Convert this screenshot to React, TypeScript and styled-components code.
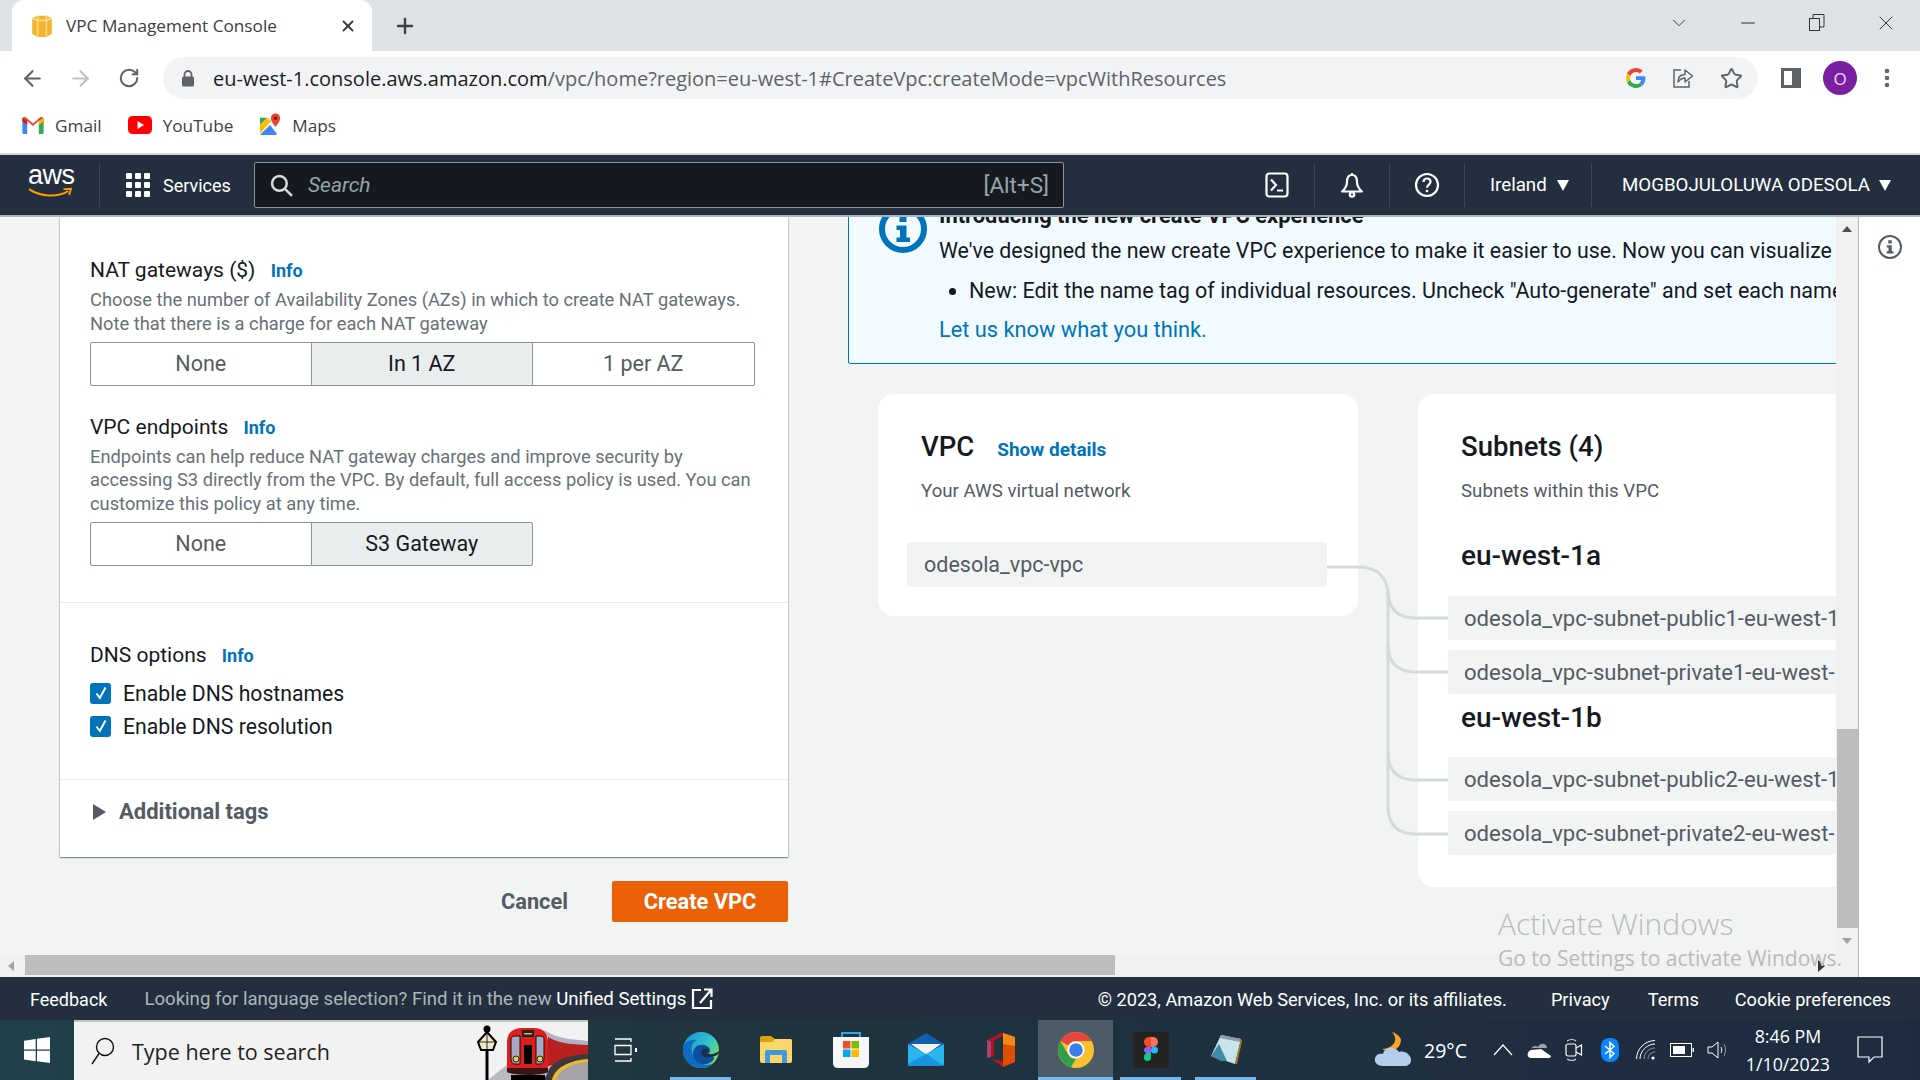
import React from "react";
import styled, { createGlobalStyle } from "styled-components";
import {
  ArrowLeft,
  ArrowRight,
  ChevronDown,
  Minus,
  MoreVertical,
  Plus,
  RotateCw,
  Star,
  X,
} from "lucide-react";

const GlobalStyle = createGlobalStyle`
  html, body {
    margin: 0;
    padding: 0;
    background: #f2f3f3;
  }
  * {
    box-sizing: border-box;
  }
  svg {
    flex: none;
    display: block;
  }
`;

const subnets = {
  a: ["odesola_vpc-subnet-public1-eu-west-1a", "odesola_vpc-subnet-private1-eu-west-1a"],
  b: ["odesola_vpc-subnet-public2-eu-west-1b", "odesola_vpc-subnet-private2-eu-west-1b"],
};

function AwsBoxIcon() {
  return (
    <svg width="22" height="24" viewBox="0 0 20 22">
      <path d="M1 4 L6 1.5 L14 1.5 L19 4 L19 18 L14 21 L6 21 L1 18 Z" fill="#f4b32c" />
      <path d="M6 1.5 L6 21 M14 1.5 L14 21" stroke="#fbd77a" strokeWidth="1.6" />
      <path d="M1 4 L6 6 L14 6 L19 4" stroke="#fde3a0" strokeWidth="1.4" fill="none" />
    </svg>
  );
}

function GmailIcon() {
  return (
    <svg width="22" height="17" viewBox="0 0 20 16">
      <path d="M0 3 V14.5 Q0 16 1.5 16 H4.5 V7 Z" fill="#4285f4" />
      <path d="M15.5 7 V16 H18.5 Q20 16 20 14.5 V3 Z" fill="#34a853" />
      <path d="M0 2.2 Q0 0 2 0 Q3 0 4 1 L10 6 L16 1 Q17 0 18 0 Q20 0 20 2.2 V4 L15.5 7.5 V3.5 L10 8.5 L4.5 3.5 V7.5 L0 4 Z" fill="#ea4335" />
      <path d="M15.5 3.5 L20 0.8 V4 L15.5 7.5 Z" fill="#fbbc04" />
      <path d="M0 0.8 L4.5 3.5 V7.5 L0 4 Z" fill="#c5221f" />
    </svg>
  );
}

function YoutubeIcon() {
  return (
    <svg width="24" height="18" viewBox="0 0 24 18">
      <rect width="24" height="18" rx="4.5" fill="#ff0000" />
      <path d="M9.5 5 L16 9 L9.5 13 Z" fill="#fff" />
    </svg>
  );
}

function MapsIcon() {
  return (
    <svg width="22" height="26" viewBox="0 0 24 26">
      <path d="M1 5 H14 V24 H1 Z" fill="#ecf3e8" />
      <path d="M1 5 H9 L1 13 Z" fill="#34a853" />
      <path d="M1 24 L12 13 L19 22 V24 Z" fill="#4285f4" />
      <path d="M1 13 L9 5 L13 9 L1 22 Z" fill="#fbbc04" />
      <path d="M18 0.5 C14.8 0.5 13 3 13 5.6 C13 9.5 18 15 18 15 C18 15 23 9.5 23 5.6 C23 3 21.2 0.5 18 0.5 Z" fill="#ea4335" />
      <circle cx="18" cy="5.6" r="1.9" fill="#8f1a12" />
    </svg>
  );
}

function GoogleIcon() {
  return (
    <svg width="20" height="20" viewBox="0 0 48 48">
      <path fill="#ea4335" d="M24 9.5c3.9 0 6.9 1.6 9.1 3.6l6.8-6.8C35.7 2.4 30.3 0 24 0 14.6 0 6.5 5.4 2.6 13.2l7.9 6.2C12.4 13.7 17.7 9.5 24 9.5z" />
      <path fill="#4285f4" d="M46.5 24.5c0-1.6-.1-3.1-.4-4.5H24v9h12.7c-.6 3-2.2 5.4-4.7 7.1l7.6 5.9c4.4-4.1 6.9-10.1 6.9-17.5z" />
      <path fill="#fbbc05" d="M10.5 28.6c-.5-1.5-.8-3-.8-4.6s.3-3.2.8-4.6l-7.9-6.2C.9 16.5 0 20.1 0 24s.9 7.5 2.6 10.8l7.9-6.2z" />
      <path fill="#34a853" d="M24 48c6.5 0 11.9-2.1 15.6-5.8L32 36.3c-2 1.4-4.7 2.2-8 2.2-6.3 0-11.6-4.2-13.5-9.9l-7.9 6.2C6.5 42.6 14.6 48 24 48z" />
    </svg>
  );
}

function ShareIcon() {
  return (
    <svg width="22" height="22" viewBox="0 0 22 22" fill="none" stroke="#5f6368" strokeWidth="1.5">
      <path d="M9 3 H2 V20 H17 V14" />
      <path d="M6 15 C6 10 9 7.5 13 7.5 V3 L20.5 9 L13 15 V11 C10 11 8 12.5 6 15 Z" strokeLinejoin="round" />
    </svg>
  );
}

function SidePanelIcon() {
  return (
    <svg width="20" height="20" viewBox="0 0 20 20">
      <path d="M0 0 H20 V20 H0 Z M3 3 V17 H11 V3 Z" fill="#5f6368" fillRule="evenodd" />
    </svg>
  );
}

function RestoreIcon() {
  return (
    <svg width="16" height="18" viewBox="0 0 16 18" fill="none" stroke="#333" strokeWidth="1">
      <rect x="0.5" y="4.5" width="10" height="12" />
      <path d="M4 4.5 V0.5 H15 V13 H10.5" />
    </svg>
  );
}

function LockIcon() {
  return (
    <svg width="14" height="17" viewBox="0 0 14 17">
      <path d="M3.5 7 V4.5 A3.5 3.5 0 0 1 10.5 4.5 V7" fill="none" stroke="#5f6368" strokeWidth="1.8" />
      <rect x="1" y="6.5" width="12" height="10" rx="1.5" fill="#5f6368" />
    </svg>
  );
}

function GridIcon() {
  return (
    <svg width="24" height="24" viewBox="0 0 24 24" fill="#fff">
      {[0, 9, 18].map((y) =>
        [0, 9, 18].map((x) => <rect key={`${x}-${y}`} x={x} y={y} width="6" height="6" rx="1" />),
      )}
    </svg>
  );
}

function SearchGlass({ color, size }: { color: string; size: number }) {
  return (
    <svg width={size} height={size} viewBox="0 0 22 22" fill="none" stroke={color} strokeWidth="2.4">
      <circle cx="9" cy="9" r="7" />
      <path d="M14 14 L21 21" />
    </svg>
  );
}

function ShellIcon() {
  return (
    <svg width="24" height="26" viewBox="0 0 24 26" fill="none" stroke="#fff" strokeWidth="2.2">
      <rect x="1.5" y="1.5" width="21" height="23" rx="3" />
      <path d="M6 7.5 L11 13 L6 18.5 M12 18.5 H18" />
    </svg>
  );
}

function BellIcon() {
  return (
    <svg width="26" height="26" viewBox="0 0 26 26" fill="none" stroke="#fff" strokeWidth="2.2">
      <path d="M13 3 C8.5 3 8 7 8 10 C8 14 6.5 16.5 3 19.5 H23 C19.5 16.5 18 14 18 10 C18 7 17.5 3 13 3 Z" strokeLinejoin="round" />
      <path d="M13 1 V3" />
      <circle cx="13" cy="22.5" r="2.2" />
    </svg>
  );
}

function HelpIcon() {
  return (
    <svg width="26" height="26" viewBox="0 0 26 26" fill="none" stroke="#fff" strokeWidth="2.2">
      <circle cx="13" cy="13" r="11" />
      <path d="M9.5 10 C9.5 7.5 11 6.5 13 6.5 C15 6.5 16.5 7.8 16.5 9.8 C16.5 12.5 13 12.8 13 15.8" />
      <circle cx="13" cy="19" r="1.3" fill="#fff" stroke="none" />
    </svg>
  );
}

function InfoCircle({ size, color, weight }: { size: number; color: string; weight: number }) {
  return (
    <svg width={size} height={size} viewBox="0 0 48 48">
      <circle cx="24" cy="24" r={24 - weight / 2} fill="none" stroke={color} strokeWidth={weight} />
      <rect x="20.5" y="10.5" width="7" height="6.5" fill={color} />
      <path d="M17.5 20.5 H27.5 V32.5 H31 V37 H17.5 V32.5 H21 V25 H17.5 Z" fill={color} />
    </svg>
  );
}

function CheckMark() {
  return (
    <svg width="14" height="14" viewBox="0 0 14 14" fill="none" stroke="#fff" strokeWidth="2">
      <path d="M2.5 7.5 L5.8 12 L11.5 1.5" />
    </svg>
  );
}

function ExternalIcon() {
  return (
    <svg width="22" height="22" viewBox="0 0 22 22" fill="none" stroke="#fff" strokeWidth="2.2">
      <path d="M10 2 H2 V20 H20 V12" />
      <path d="M13 1.5 H20.5 V9 M20 2 L9 15" />
    </svg>
  );
}

function WindowsLogo() {
  return (
    <svg width="26" height="26" viewBox="0 0 26 26" fill="#fff">
      <path d="M0 3.7 L11.7 2 V12.5 H0 Z M13 1.8 L26 0 V12.5 H13 Z M0 13.7 H11.7 V24.3 L0 22.5 Z M13 13.7 H26 V26 L13 24.2 Z" />
    </svg>
  );
}

function TrainArt() {
  return (
    <svg width="128" height="58" viewBox="0 0 128 58">
      <path d="M28 58 L48 42 L128 38 V58 Z" fill="#b9b9c0" />
      <path d="M88 12 C100 20 112 20 128 21 V36 L88 44 Z" fill="#b92020" />
      <path d="M84 8 C100 18 112 17 128 19 V23 C110 22 100 22 88 15 Z" fill="#aeb2c6" />
      <path d="M88 50 C92 38 110 33 128 32 V58 H84 Z" fill="#3a3a3a" />
      <path d="M92 58 C94 46 110 38 128 37 V58 Z" fill="#f0b92d" />
      <path d="M96 58 C98 48 112 41 128 40 V58 Z" fill="#a5a2a8" />
      <path d="M47 20 C47 10 54 6 62 6 H74 C82 6 88 10 88 20 V44 C88 48 85 50 82 50 H54 C50 50 47 48 47 44 Z" fill="#e01e1e" />
      <path d="M47 46 H88 V50 C84 54 52 54 47 50 Z" fill="#3a1414" />
      <rect x="62" y="8" width="12" height="7" fill="#222" />
      <rect x="64" y="11" width="8" height="1.5" fill="#e2b45a" />
      <path d="M51 17 C51 14 54 14 60 14 V42 H55 C52 42 51 39 51 36 Z" fill="#a8a8c0" stroke="#111" strokeWidth="1" />
      <path d="M84 17 C84 14 81 14 76 14 V42 H80 C83 42 84 39 84 36 Z" fill="#a8a8c0" stroke="#111" strokeWidth="1" />
      <rect x="64" y="23" width="8" height="19" fill="#000" />
      <circle cx="56" cy="37" r="3" fill="#f2c94c" stroke="#222" />
      <circle cx="80" cy="37" r="3" fill="#f2c94c" stroke="#222" />
      <rect x="51" y="53" width="34" height="5" fill="#000" />
      <rect x="25.5" y="28" width="3" height="30" fill="#000" />
      <circle cx="27" cy="7" r="3.5" fill="#000" />
      <path d="M27 10 L36 20 L33 28 H21 L18 20 Z" fill="#efe7c8" stroke="#000" strokeWidth="2" />
      <path d="M27 10 V28 M18 20 H36" stroke="#000" strokeWidth="0.8" />
    </svg>
  );
}

function TaskViewIcon() {
  return (
    <svg width="24" height="24" viewBox="0 0 24 24" fill="none" stroke="#fff" strokeWidth="1.3">
      <path d="M1 1 H17 V4 M1 23 H17 V20 M1 7.5 H17 V16.5 H1 Z" />
      <rect x="21" y="10" width="2" height="4" fill="#fff" stroke="none" />
    </svg>
  );
}

function EdgeIcon() {
  return (
    <svg width="36" height="36" viewBox="0 0 36 36">
      <defs>
        <linearGradient id="edgeTop" x1="0" y1="0" x2="1" y2="0.7">
          <stop offset="0" stopColor="#1a8fd8" />
          <stop offset="0.6" stopColor="#30c2c8" />
          <stop offset="1" stopColor="#7fdc5e" />
        </linearGradient>
      </defs>
      <circle cx="18" cy="18" r="18" fill="url(#edgeTop)" />
      <path d="M0 18 C0 9 8 7 14 8 C9 11 8 14 9 20 C11 30 22 36 30 31 C26 35 22 36 18 36 C8 36 0 28 0 18 Z" fill="#0f6cc4" />
      <path d="M10 22 C10 14 18 11 24 14 C28 16 28 21 24 23 L30 24 C33 26 29 31 24 32 C15 33 10 28 10 22 Z" fill="#0d4f9c" />
      <path d="M19 22 C17 19 21 15 25 17 C27 19 25 21 22 20 C26 24 32 22 36 19 C36 24 32 24 26 25 C22 26 20 24 19 22 Z" fill="#1f2f3f" />
    </svg>
  );
}

function FolderIcon() {
  return (
    <svg width="32" height="28" viewBox="0 0 32 28">
      <path d="M0 2 Q0 0 2 0 H11 L15 3 H30 Q32 3 32 5 V8 H0 Z" fill="#d9a30f" />
      <path d="M0 6 H12 L15 3 H30 Q32 3 32 5 V25 Q32 27 30 27 H2 Q0 27 0 25 Z" fill="#fbd76a" />
      <path d="M5 27 V16 Q5 14 7 14 H25 Q27 14 27 16 V27 H22 V19 H10 V27 Z" fill="#3f9ae0" />
    </svg>
  );
}

function StoreIcon() {
  return (
    <svg width="36" height="36" viewBox="0 0 36 36">
      <path d="M9 5 V1 H27 V5" fill="none" stroke="#2aa8e0" strokeWidth="2" />
      <path d="M0 5 H36 V31 Q36 36 31 36 H5 Q0 36 0 31 Z" fill="#f6f6f6" />
      <rect x="10" y="9" width="7.5" height="7.5" fill="#f25022" />
      <rect x="18.5" y="9" width="7.5" height="7.5" fill="#7fba00" />
      <rect x="10" y="17.5" width="7.5" height="7.5" fill="#00a4ef" />
      <rect x="18.5" y="17.5" width="7.5" height="7.5" fill="#ffb900" />
    </svg>
  );
}

function MailIcon() {
  return (
    <svg width="36" height="34" viewBox="0 0 36 34">
      <path d="M0 11 L18 0 L36 11 V14 H0 Z" fill="#0f5fae" />
      <path d="M3 11 H33 L18 22 Z" fill="#f4f4f4" />
      <path d="M0 11 L18 21 L36 11 V31 Q36 33 34 33 H2 Q0 33 0 31 Z" fill="#29b6ef" />
      <path d="M0 31 L18 21 L36 33 H2 Q0 33 0 31 Z" fill="#1a92dc" />
    </svg>
  );
}

function OfficeIcon() {
  return (
    <svg width="28" height="36" viewBox="0 0 28 36">
      <path d="M0 8 L16 0 V4 L7 8 V24 L0 26 Z" fill="#b3141d" />
      <path d="M0 8 V26 L4 25 V10 Z" fill="#a8437a" />
      <path d="M16 1 L28 5 V30 L16 35 Z" fill="#e04e00" />
      <path d="M16 1 L28 5 V14 L16 12 Z" fill="#f08a12" />
      <path d="M5 27 L16 29 V35 Z" fill="#c2121e" />
    </svg>
  );
}

function ChromeIcon() {
  return (
    <svg width="36" height="36" viewBox="0 0 36 36">
      <circle cx="18" cy="18" r="18" fill="#fbc02d" />
      <path d="M18 0 A18 18 0 0 1 33.6 9 H18 A9 9 0 0 0 10 13.5 L2.4 9 A18 18 0 0 1 18 0 Z" fill="#e8453c" />
      <path d="M2.4 9 L10.2 22.5 A9 9 0 0 0 18 27 L13 35.3 A18 18 0 0 1 2.4 9 Z" fill="#2f9e4f" />
      <circle cx="18" cy="18" r="8.5" fill="#fff" />
      <circle cx="18" cy="18" r="6.8" fill="#3b7ee9" />
    </svg>
  );
}

function FigmaIcon() {
  return (
    <svg width="36" height="36" viewBox="0 0 36 36">
      <rect width="36" height="36" rx="3" fill="#232323" />
      <path d="M11 10 A5 5 0 0 1 16 5 H19 V15 H16 A5 5 0 0 1 11 10 Z" fill="#f24e1e" />
      <path d="M18 5 H20 A5 5 0 0 1 20 15 H18 Z" fill="#ff7262" />
      <path d="M11 18 A3.5 3.5 0 0 1 16 15 H18 V21 H16 A3.5 3.5 0 0 1 11 18 Z" fill="#a259ff" />
      <circle cx="21.5" cy="18" r="3.5" fill="#1abcfe" />
      <path d="M11 25 A4 4 0 0 1 15 21 H18 V26 A3.5 3.5 0 0 1 11 25 Z" fill="#0acf83" />
    </svg>
  );
}

function NotepadIcon() {
  return (
    <svg width="34" height="32" viewBox="0 0 34 32">
      <path d="M12 1 L32 5 L26 30 L2 22 Z" fill="#c6e4ea" />
      <path d="M2 22 L10 10 L18 27 L12 27 Z" fill="#3f8ba5" />
      <path d="M12 1 L32 5 L31 8 L11 4 Z" fill="#8d9ca2" />
      <path d="M32 5 L33 7 L28 30 L26 30 Z" fill="#a9791c" />
    </svg>
  );
}

function WeatherIcon() {
  return (
    <svg width="38" height="36" viewBox="0 0 38 36">
      <path d="M18 0 C24 6 22 16 8 17 C14 20 26 20 27 8 C27 5 22 1 18 0 Z" fill="#f5a623" />
      <path d="M9 34 C3 34 0 30 1 26 C2 22 6 21 9 22 C10 15 21 13 25 20 C31 18 37 23 37 28 C37 32 34 34 30 34 Z" fill="#b5cdec" />
    </svg>
  );
}

function OneDriveIcon() {
  return (
    <svg width="24" height="16" viewBox="0 0 24 16">
      <path d="M4 8 C4 4 9 3 11 5 C13 0 20 1 20 6 H4 Z" fill="#9aa3ad" />
      <path d="M4 16 C0 16 -1 10 4 8 L14 7 L24 14 Q24 16 22 16 Z" fill="#fff" />
    </svg>
  );
}

function MeetIcon() {
  return (
    <svg width="18" height="24" viewBox="0 0 18 24" fill="none" stroke="#fff" strokeWidth="1.2">
      <rect x="1" y="6" width="10" height="12" rx="2" />
      <path d="M11 10 L16.5 7 V17 L11 14" />
      <path d="M2 3 C5 1 9 1 11 3 M2 21 C5 23 9 23 11 21" stroke="#c9d0d6" />
    </svg>
  );
}

function BluetoothIcon() {
  return (
    <svg width="18" height="24" viewBox="0 0 18 24">
      <rect width="18" height="24" rx="8" fill="#0a84ff" />
      <path d="M4 8 L13 15.5 L9 19.5 V4.5 L13 8.5 L4 16" fill="none" stroke="#fff" strokeWidth="1.5" />
    </svg>
  );
}

function WifiIcon() {
  return (
    <svg width="20" height="20" viewBox="0 0 20 20" fill="none" stroke="#fff" strokeWidth="1">
      <path d="M0.5 19 C0.5 9 9 0.5 19 0.5" />
      <path d="M4 19 C4 11 11 4 19 4" />
      <path d="M8 19 C8 13 13 8 19 8" stroke="#8e99a3" />
      <path d="M12 19 C12 15 15 12 19 12" stroke="#8e99a3" />
      <circle cx="17" cy="18" r="1.6" fill="#fff" stroke="none" />
    </svg>
  );
}

function BatteryIcon() {
  return (
    <svg width="24" height="14" viewBox="0 0 24 14">
      <rect x="0.5" y="0.5" width="21" height="13" fill="none" stroke="#fff" />
      <rect x="3" y="3" width="12" height="8" fill="#fff" />
      <rect x="22.5" y="5" width="1.5" height="4" fill="#fff" />
    </svg>
  );
}

function VolumeIcon() {
  return (
    <svg width="22" height="20" viewBox="0 0 22 20" fill="none" stroke="#fff" strokeWidth="1">
      <path d="M1 7 H5 L11 2 V18 L5 13 H1 Z" />
      <path d="M14 7 C15 9 15 11 14 13" />
      <path d="M17 4 C19 8 19 12 17 16" stroke="#8e99a3" />
    </svg>
  );
}

function NotificationIcon() {
  return (
    <svg width="26" height="28" viewBox="0 0 26 28" fill="none" stroke="#fff" strokeWidth="1.2">
      <path d="M1 1 H25 V21 H17 L12 26 V21 H1 Z" />
    </svg>
  );
}

interface SegmentsProps {
  options: string[];
  selected: string;
}

function Segments({ options, selected }: SegmentsProps) {
  return (
    <SegmentGroup>
      {options.map((option) => (
        <Segment key={option} $active={option === selected}>
          {option}
        </Segment>
      ))}
    </SegmentGroup>
  );
}

function DnsCheck({ label }: { label: string }) {
  return (
    <CheckRow>
      <CheckBox>
        <CheckMark />
      </CheckBox>
      {label}
    </CheckRow>
  );
}

export default function App() {
  return (
    <Page>
      <GlobalStyle />

      <TabStrip>
        <Tab>
          <AwsBoxIcon />
          <TabTitle>VPC Management Console</TabTitle>
          <X size={18} color="#3c4043" strokeWidth={2.6} />
        </Tab>
        <NewTab>
          <Plus size={24} color="#3c4043" strokeWidth={2.4} />
        </NewTab>
        <WindowControls>
          <ControlCell>
            <ChevronDown size={22} color="#333" strokeWidth={1} />
          </ControlCell>
          <ControlCell>
            <Minus size={22} color="#333" strokeWidth={1.2} />
          </ControlCell>
          <ControlCell>
            <RestoreIcon />
          </ControlCell>
          <ControlCell>
            <X size={24} color="#333" strokeWidth={1} />
          </ControlCell>
        </WindowControls>
      </TabStrip>

      <Toolbar>
        <ArrowLeft size={25} color="#5f6368" strokeWidth={2} />
        <ArrowRight size={25} color="#bdc1c6" strokeWidth={2} />
        <ReloadSlot>
          <RotateCw size={22} color="#5f6368" strokeWidth={2.2} />
        </ReloadSlot>
        <Omnibox>
          <LockIcon />
          <Url>
            <UrlHost>eu-west-1.console.aws.amazon.com</UrlHost>
            /vpc/home?region=eu-west-1#CreateVpc:createMode=vpcWithResources
          </Url>
          <OmniboxActions>
            <GoogleIcon />
            <ShareIcon />
            <Star size={23} color="#5f6368" strokeWidth={2} />
          </OmniboxActions>
        </Omnibox>
        <SidePanelIcon />
        <Avatar>O</Avatar>
        <MenuSlot>
          <MoreVertical size={24} color="#5f6368" strokeWidth={2.6} />
        </MenuSlot>
      </Toolbar>

      <Bookmarks>
        <Bookmark>
          <GmailIcon />
          Gmail
        </Bookmark>
        <Bookmark>
          <YoutubeIcon />
          YouTube
        </Bookmark>
        <Bookmark>
          <MapsIcon />
          Maps
        </Bookmark>
      </Bookmarks>

      <ConsoleNav>
        <AwsLogo>
          <AwsWord>aws</AwsWord>
          <svg width="44" height="11" viewBox="0 0 46 11" fill="none">
            <path d="M1 2 C13 10 30 11 42 4" stroke="#f90" strokeWidth="2.2" />
            <path d="M37 2 L45 1.5 L43 8" stroke="#f90" strokeWidth="2" />
          </svg>
        </AwsLogo>
        <ServicesButton>
          <GridIcon />
          Services
        </ServicesButton>
        <GlobalSearch>
          <SearchGlass color="#d5dbdb" size={23} />
          <SearchHint>Search</SearchHint>
          <Shortcut>[Alt+S]</Shortcut>
        </GlobalSearch>
        <NavRight>
          <NavIconCell>
            <ShellIcon />
          </NavIconCell>
          <NavIconCell>
            <BellIcon />
          </NavIconCell>
          <NavIconCell>
            <HelpIcon />
          </NavIconCell>
          <RegionMenu>
            Ireland
            <NavCaret />
          </RegionMenu>
          <AccountMenu>
            MOGBOJULOLUWA ODESOLA
            <NavCaret />
          </AccountMenu>
        </NavRight>
      </ConsoleNav>

      <Workspace>
        <Canvas>
          <Scroller>
            <FormColumn>
              <FormPanel>
                <FormSection>
                  <FieldLabel>
                    NAT gateways ($) <InfoLink>Info</InfoLink>
                  </FieldLabel>
                  <FieldHelp>
                    Choose the number of Availability Zones (AZs) in which to create NAT gateways.
                    <br />
                    Note that there is a charge for each NAT gateway
                  </FieldHelp>
                  <Segments options={["None", "In 1 AZ", "1 per AZ"]} selected="In 1 AZ" />
                  <FieldLabel $spaced>
                    VPC endpoints <InfoLink>Info</InfoLink>
                  </FieldLabel>
                  <FieldHelp>
                    Endpoints can help reduce NAT gateway charges and improve security by
                    <br />
                    accessing S3 directly from the VPC. By default, full access policy is used. You can
                    <br />
                    customize this policy at any time.
                  </FieldHelp>
                  <Segments options={["None", "S3 Gateway"]} selected="S3 Gateway" />
                </FormSection>
                <DnsSection>
                  <FieldLabel>
                    DNS options <InfoLink>Info</InfoLink>
                  </FieldLabel>
                  <CheckList>
                    <DnsCheck label="Enable DNS hostnames" />
                    <DnsCheck label="Enable DNS resolution" />
                  </CheckList>
                </DnsSection>
                <TagsSection>
                  <TagsCaret />
                  Additional tags
                </TagsSection>
              </FormPanel>
              <FormActions>
                <CancelButton>Cancel</CancelButton>
                <CreateButton>Create VPC</CreateButton>
              </FormActions>
            </FormColumn>

            <PreviewColumn>
              <Banner>
                <BannerIcon>
                  <InfoCircle size={48} color="#0073bb" weight={6} />
                </BannerIcon>
                <BannerBody>
                  <BannerTitle>Introducing the new create VPC experience</BannerTitle>
                  <BannerLine>
                    We've designed the new create VPC experience to make it easier to use. Now you can visualize your VPC
                  </BannerLine>
                  <BannerBullets>
                    <li>
                      New: Edit the name tag of individual resources. Uncheck "Auto-generate" and set each name tag
                    </li>
                  </BannerBullets>
                  <BannerLink>Let us know what you think.</BannerLink>
                </BannerBody>
              </Banner>

              <Diagram>
                <VpcCard>
                  <CardTitleRow>
                    <CardTitle>VPC</CardTitle>
                    <ShowDetails>Show details</ShowDetails>
                  </CardTitleRow>
                  <CardSubtitle>Your AWS virtual network</CardSubtitle>
                  <VpcNode>odesola_vpc-vpc</VpcNode>
                </VpcCard>
                <SubnetCard>
                  <CardTitleRow>
                    <CardTitle>Subnets (4)</CardTitle>
                  </CardTitleRow>
                  <CardSubtitle>Subnets within this VPC</CardSubtitle>
                  <ZoneTitle>eu-west-1a</ZoneTitle>
                  <NodeStack>
                    {subnets.a.map((name) => (
                      <SubnetNode key={name}>{name}</SubnetNode>
                    ))}
                  </NodeStack>
                  <ZoneTitle $second>eu-west-1b</ZoneTitle>
                  <NodeStack>
                    {subnets.b.map((name) => (
                      <SubnetNode key={name}>{name}</SubnetNode>
                    ))}
                  </NodeStack>
                </SubnetCard>
                <Connectors width="580" height="460" viewBox="0 0 580 460" fill="none">
                  <path d="M449 173 H480 Q510 173 510 203 V412 Q510 440 538 440 H570" />
                  <path d="M510 196 Q510 224 538 224 H570" />
                  <path d="M510 250 Q510 278 538 278 H570" />
                  <path d="M510 358 Q510 386 538 386 H570" />
                </Connectors>
              </Diagram>
            </PreviewColumn>
          </Scroller>
          <HScroll>
            <ArrowLeftTip />
            <HThumb />
            <ArrowRightTip />
          </HScroll>
        </Canvas>
        <VScroll>
          <ArrowUpTip />
          <VThumb />
          <ArrowDownTip />
        </VScroll>
        <Rail>
          <InfoCircle size={24} color="#545b64" weight={4} />
        </Rail>
        <Watermark>
          <WatermarkTitle>Activate Windows</WatermarkTitle>
          <WatermarkText>Go to Settings to activate Windows.</WatermarkText>
        </Watermark>
      </Workspace>

      <Footer>
        <FooterLink>Feedback</FooterLink>
        <FooterNote>
          Looking for language selection? Find it in the new <FooterLink>Unified Settings</FooterLink>
          <ExternalIcon />
        </FooterNote>
        <FooterRight>
          <FooterLink>© 2023, Amazon Web Services, Inc. or its affiliates.</FooterLink>
          <FooterLink>Privacy</FooterLink>
          <FooterLink>Terms</FooterLink>
          <FooterLink>Cookie preferences</FooterLink>
        </FooterRight>
      </Footer>

      <Taskbar>
        <StartTile>
          <WindowsLogo />
        </StartTile>
        <TaskSearch>
          <SearchGlassSlim>
            <svg width="24" height="28" viewBox="0 0 24 28" fill="none" stroke="#111" strokeWidth="1.4">
              <circle cx="14" cy="10" r="8.5" />
              <path d="M8 16.5 L1 27" />
            </svg>
          </SearchGlassSlim>
          <TaskSearchText>Type here to search</TaskSearchText>
          <TrainArt />
        </TaskSearch>
        <TaskTile>
          <TaskViewIcon />
        </TaskTile>
        <TaskTile $open>
          <EdgeIcon />
        </TaskTile>
        <TaskTile>
          <FolderIcon />
        </TaskTile>
        <TaskTile>
          <StoreIcon />
        </TaskTile>
        <TaskTile>
          <MailIcon />
        </TaskTile>
        <TaskTile>
          <OfficeIcon />
        </TaskTile>
        <TaskTile $open $active>
          <ChromeIcon />
        </TaskTile>
        <TaskTile $open>
          <FigmaIcon />
        </TaskTile>
        <TaskTile $open>
          <NotepadIcon />
        </TaskTile>
        <Tray>
          <WeatherIcon />
          <Temperature>29°C</Temperature>
          <TrayIcons>
            <svg width="20" height="12" viewBox="0 0 20 12" fill="none" stroke="#fff" strokeWidth="1.2">
              <path d="M1 11 L10 1 L19 11" />
            </svg>
            <OneDriveIcon />
            <MeetIcon />
            <BluetoothIcon />
            <WifiIcon />
            <BatteryIcon />
            <VolumeIcon />
          </TrayIcons>
          <Clock>
            <span>8:46 PM</span>
            <span>1/10/2023</span>
          </Clock>
          <NotificationIcon />
        </Tray>
      </Taskbar>
    </Page>
  );
}

const Page = styled.div`
  width: 1920px;
  height: 1080px;
  display: flex;
  flex-direction: column;
  overflow: hidden;
  font-family: Roboto, "Liberation Sans", sans-serif;
`;

const TabStrip = styled.div`
  height: 51px;
  flex: none;
  display: flex;
  align-items: flex-end;
  background: #dee1e6;
  padding-left: 12px;
`;

const Tab = styled.div`
  width: 360px;
  height: 51px;
  flex: none;
  display: flex;
  align-items: center;
  padding: 0 15px 0 19px;
  gap: 13px;
  background: #fff;
  border-radius: 12px 12px 0 0;
`;

const TabTitle = styled.span`
  flex: 1;
  font-family: "Open Sans", sans-serif;
  font-size: 17.2px;
  color: #3c4043;
  white-space: nowrap;
`;

const NewTab = styled.div`
  width: 46px;
  margin-left: 10px;
  height: 51px;
  display: flex;
  align-items: center;
  justify-content: center;
`;

const WindowControls = styled.div`
  margin-left: auto;
  height: 51px;
  padding-bottom: 5px;
  display: flex;
  align-items: center;
`;

const ControlCell = styled.div`
  width: 69px;
  display: flex;
  justify-content: center;
`;

const Toolbar = styled.div`
  height: 54px;
  flex: none;
  display: flex;
  align-items: center;
  padding-left: 20px;
  background: #fff;
  gap: 23px;
`;

const ReloadSlot = styled.div`
  margin-left: 2px;
`;

const MenuSlot = styled.div`
  margin-left: -5px;
`;

const Omnibox = styled.div`
  width: 1595px;
  height: 42px;
  flex: none;
  display: flex;
  align-items: center;
  padding: 0 15px 0 18px;
  gap: 18px;
  background: #f1f3f4;
  border-radius: 21px;
`;

const Url = styled.span`
  flex: 1;
  font-family: "Open Sans", sans-serif;
  font-size: 20px;
  color: #5f6368;
  white-space: nowrap;
`;

const UrlHost = styled.span`
  color: #202124;
`;

const OmniboxActions = styled.div`
  display: flex;
  align-items: center;
  gap: 26px;
`;

const Avatar = styled.div`
  width: 34px;
  height: 34px;
  flex: none;
  margin-left: -1px;
  border-radius: 50%;
  background: #7b1fa2;
  color: #f0d8f5;
  font-family: "Open Sans", sans-serif;
  font-size: 17px;
  display: flex;
  align-items: center;
  justify-content: center;
`;

const Bookmarks = styled.div`
  height: 48px;
  flex: none;
  display: flex;
  align-items: center;
  padding: 0 0 8px 22px;
  gap: 26px;
  background: #fff;
`;

const Bookmark = styled.div`
  display: flex;
  align-items: center;
  gap: 11px;
  font-family: "Open Sans", sans-serif;
  font-size: 17.2px;
  color: #3c4043;
`;

const ConsoleNav = styled.nav`
  height: 64px;
  flex: none;
  display: flex;
  align-items: center;
  background: #232f3e;
  border-top: 2px solid #d3d6da;
  border-bottom: 2px solid #aab7b8;
  color: #fff;
  font-size: 18px;
`;

const AwsLogo = styled.div`
  width: 100px;
  height: 44px;
  flex: none;
  padding-left: 28px;
  border-right: 1px solid #414750;
  display: flex;
  flex-direction: column;
`;

const AwsWord = styled.span`
  font-family: "Liberation Sans", sans-serif;
  font-size: 27px;
  line-height: 24px;
  letter-spacing: -0.5px;
`;

const ServicesButton = styled.div`
  width: 154px;
  flex: none;
  padding-left: 26px;
  display: flex;
  align-items: center;
  gap: 13px;
`;

const GlobalSearch = styled.div`
  width: 810px;
  height: 46px;
  flex: none;
  display: flex;
  align-items: center;
  padding: 0 14px 0 15px;
  gap: 15px;
  background: #161a20;
  border: 1px solid #879596;
  border-radius: 2px;
`;

const SearchHint = styled.span`
  flex: 1;
  font-style: italic;
  font-size: 21px;
  color: #95a5a6;
`;

const Shortcut = styled.span`
  font-size: 22.5px;
  color: #95a5a6;
`;

const NavRight = styled.div`
  margin-left: 176px;
  display: flex;
  align-items: center;
  font-size: 18.7px;
`;

const NavIconCell = styled.div`
  width: 75px;
  height: 44px;
  flex: none;
  display: flex;
  align-items: center;
  justify-content: center;
  border-right: 1px solid #414750;
`;

const RegionMenu = styled.div`
  width: 127px;
  height: 44px;
  flex: none;
  display: flex;
  align-items: center;
  gap: 10px;
  padding-left: 25px;
  border-right: 1px solid #414750;
`;

const AccountMenu = styled.div`
  height: 44px;
  flex: none;
  display: flex;
  align-items: center;
  gap: 9px;
  padding-left: 30px;
  white-space: nowrap;
`;

const NavCaret = styled.span`
  width: 0;
  height: 0;
  border-left: 6.5px solid transparent;
  border-right: 6.5px solid transparent;
  border-top: 11px solid #fff;
`;

const Workspace = styled.main`
  flex: 1;
  min-height: 0;
  position: relative;
  display: flex;
  background: #f2f3f3;
  overflow: hidden;
`;

const Canvas = styled.div`
  width: 1836px;
  flex: none;
  display: flex;
  flex-direction: column;
  overflow: hidden;
`;

const Scroller = styled.div`
  flex: 1;
  min-height: 0;
  display: flex;
  gap: 60px;
  padding-left: 60px;
  overflow: hidden;
`;

const FormColumn = styled.div`
  width: 728px;
  flex: none;
`;

const FormPanel = styled.section`
  background: #fff;
  box-shadow: 0 1px 1px 0 rgba(0, 28, 36, 0.45), 1px 0 1px 0 rgba(0, 28, 36, 0.12), -1px 0 1px 0 rgba(0, 28, 36, 0.12);
`;

const FormSection = styled.div`
  padding: 40px 30px 36px 30px;
  border-bottom: 1px solid #eaeded;
`;

const FieldLabel = styled.div<{ $spaced?: boolean }>`
  font-size: 21px;
  line-height: 26px;
  color: #16191f;
  margin-top: ${(p) => (p.$spaced ? "28px" : "0")};
`;

const InfoLink = styled.a`
  margin-left: 10px;
  font-size: 18px;
  font-weight: 700;
  color: #0073bb;
`;

const FieldHelp = styled.div`
  margin: 4px 0 6px;
  font-size: 18.3px;
  line-height: 23.8px;
  color: #687078;
  white-space: nowrap;
`;

const SegmentGroup = styled.div`
  display: grid;
  grid-template-columns: repeat(3, 221.5px);
`;

const Segment = styled.div<{ $active: boolean }>`
  height: 44px;
  display: flex;
  align-items: center;
  justify-content: center;
  font-size: 21.5px;
  border: 1px solid #879596;
  margin-left: -1px;
  color: ${(p) => (p.$active ? "#16191f" : "#545b64")};
  background: ${(p) => (p.$active ? "#eaeded" : "#fff")};

  &:first-child {
    margin-left: 0;
    border-radius: 2px 0 0 2px;
  }
  &:last-child {
    border-radius: 0 2px 2px 0;
  }
`;

const DnsSection = styled.div`
  padding: 39px 30px 36.5px;
  border-bottom: 1px solid #eaeded;
`;

const CheckList = styled.div`
  margin-top: 8px;
`;

const CheckRow = styled.div`
  height: 33px;
  display: flex;
  align-items: center;
  gap: 12px;
  font-size: 21.2px;
  color: #16191f;
`;

const CheckBox = styled.span`
  width: 21px;
  height: 21px;
  border-radius: 3px;
  background: #0073bb;
  display: flex;
  align-items: center;
  justify-content: center;
`;

const TagsSection = styled.div`
  height: 77px;
  display: flex;
  align-items: center;
  padding: 0 0 14px 33px;
  gap: 13px;
  font-size: 22px;
  font-weight: 700;
  color: #545b64;
`;

const TagsCaret = styled.span`
  width: 0;
  height: 0;
  border-top: 8px solid transparent;
  border-bottom: 8px solid transparent;
  border-left: 13px solid #545b64;
`;

const FormActions = styled.div`
  margin-top: 24px;
  display: flex;
  justify-content: flex-end;
  align-items: center;
  gap: 44px;
`;

const CancelButton = styled.span`
  font-size: 21.8px;
  font-weight: 700;
  color: #545b64;
`;

const CreateButton = styled.span`
  width: 176px;
  height: 41px;
  border-radius: 2px;
  background: #ec6108;
  color: #fff;
  font-size: 21.8px;
  font-weight: 700;
  display: flex;
  align-items: center;
  justify-content: center;
`;

const PreviewColumn = styled.div`
  width: 1200px;
  flex: none;
`;

const Banner = styled.section`
  margin-top: -30px;
  height: 177px;
  display: flex;
  padding: 16px 30px 0;
  gap: 12px;
  background: #f1faff;
  border: 1px solid #0073bb;
  border-radius: 2px;
`;

const BannerIcon = styled.div`
  flex: none;
  height: 48px;
  margin-top: 1px;
`;

const BannerBody = styled.div`
  color: #16191f;
  white-space: nowrap;
`;

const BannerTitle = styled.div`
  font-size: 21.9px;
  font-weight: 700;
  line-height: 24px;
`;

const BannerLine = styled.div`
  margin-top: 11px;
  font-size: 21.35px;
  line-height: 24px;
`;

const BannerBullets = styled.ul`
  margin: 16px 0 0;
  padding-left: 30px;
  font-size: 21.5px;
  line-height: 24px;
`;

const BannerLink = styled.a`
  display: block;
  margin-top: 15px;
  font-size: 21.8px;
  line-height: 24px;
  color: #0073bb;
`;

const Diagram = styled.div`
  position: relative;
  margin: 30px 0 0 30px;
  display: flex;
  align-items: flex-start;
  gap: 60px;
`;

const Card = styled.div`
  flex: none;
  background: #fff;
  border-radius: 16px;
  padding: 37px 30px 0 43px;
`;

const VpcCard = styled(Card)`
  width: 480px;
  height: 222px;
`;

const SubnetCard = styled(Card)`
  width: 640px;
  height: 493px;
`;

const CardTitleRow = styled.div`
  height: 32px;
  display: flex;
  align-items: baseline;
  gap: 23px;
`;

const CardTitle = styled.h2`
  margin: 0;
  font-size: 27.5px;
  line-height: 32px;
  font-weight: 500;
  color: #16191f;
`;

const ShowDetails = styled.a`
  font-size: 19px;
  font-weight: 700;
  color: #0073bb;
`;

const CardSubtitle = styled.div`
  margin-top: 17px;
  font-size: 18.7px;
  line-height: 22px;
  color: #545b64;
`;

const VpcNode = styled.div`
  width: 420px;
  height: 45px;
  margin: 40px 0 0 -14px;
  display: flex;
  align-items: center;
  padding: 0 0 1px 17px;
  background: #f2f3f3;
  border-radius: 3px;
  font-size: 21.5px;
  color: #545b64;
`;

const ZoneTitle = styled.h3<{ $second?: boolean }>`
  margin: ${(p) => (p.$second ? "7.5px" : "38px")} 0 ${(p) => (p.$second ? "23.5px" : "24px")};
  font-size: 28px;
  line-height: 32px;
  font-weight: 500;
  color: #16191f;
`;

const NodeStack = styled.div`
  margin-left: -13px;
  display: flex;
  flex-direction: column;
  gap: 10px;
`;

const SubnetNode = styled.div`
  height: 44px;
  display: flex;
  align-items: center;
  padding-left: 16px;
  background: #f2f3f3;
  border-radius: 3px;
  font-size: 22.1px;
  color: #545b64;
  white-space: nowrap;
`;

const Connectors = styled.svg`
  position: absolute;
  left: 0;
  top: 0;
  stroke: #d5dbdb;
  stroke-width: 3;
  pointer-events: none;
`;

const HScroll = styled.div`
  height: 22px;
  flex: none;
  position: relative;
  background: #f1f1f1;
  display: flex;
  align-items: center;
`;

const HThumb = styled.div`
  width: 1090px;
  height: 20px;
  margin: 0 0 2px 11px;
  background: #bdbdbd;
`;

const ArrowLeftTip = styled.span`
  width: 0;
  height: 0;
  margin-left: 8px;
  border-top: 5px solid transparent;
  border-bottom: 5px solid transparent;
  border-right: 6px solid #a3a3a3;
`;

const ArrowRightTip = styled.span`
  width: 0;
  height: 0;
  margin-left: auto;
  margin-right: 11px;
  border-top: 6px solid transparent;
  border-bottom: 6px solid transparent;
  border-left: 7px solid #333;
`;

const VScroll = styled.div`
  width: 23px;
  flex: none;
  display: flex;
  flex-direction: column;
  align-items: center;
  background: #f1f1f1;
  border-right: 1px solid #b5b5b5;
`;

const VThumb = styled.div`
  width: 21px;
  height: 199px;
  margin-top: auto;
  background: #bdbdbd;
`;

const ArrowUpTip = styled.span`
  width: 0;
  height: 0;
  margin-top: 9px;
  border-left: 5px solid transparent;
  border-right: 5px solid transparent;
  border-bottom: 6px solid #505050;
`;

const ArrowDownTip = styled.span`
  width: 0;
  height: 0;
  margin: 10px 0 33px;
  border-left: 5px solid transparent;
  border-right: 5px solid transparent;
  border-top: 6px solid #a3a3a3;
`;

const Rail = styled.aside`
  flex: 1;
  background: #fff;
  display: flex;
  justify-content: center;
  padding-top: 18px;
`;

const Watermark = styled.div`
  position: absolute;
  left: 1498px;
  top: 688px;
  font-family: "Open Sans", sans-serif;
  color: #b9bbbb;
  white-space: nowrap;
  pointer-events: none;
`;

const WatermarkTitle = styled.div`
  font-size: 30px;
  line-height: 38px;
  font-weight: 300;
`;

const WatermarkText = styled.div`
  font-size: 21px;
  line-height: 30px;
`;

const Footer = styled.footer`
  height: 43px;
  flex: none;
  display: flex;
  align-items: center;
  padding: 1px 29px 0 30px;
  background: #232f3e;
  font-size: 18px;
  color: #d5dbdb;
`;

const FooterLink = styled.span`
  color: #fff;
`;

const FooterNote = styled.div`
  margin-left: 37px;
  display: flex;
  align-items: center;
  white-space: pre;
  font-size: 18.6px;
  color: #aab7b8;
  svg {
    margin-left: 5px;
  }
`;

const FooterRight = styled.div`
  margin-left: auto;
  display: flex;
  gap: 38px;
  font-size: 18.2px;

  > :first-child {
    margin-right: 6px;
  }
  > :last-child {
    margin-left: -2px;
  }
`;

const Taskbar = styled.div`
  height: 60px;
  flex: none;
  display: flex;
  align-items: stretch;
  background: linear-gradient(90deg, #21404a 0%, #20343f 40%, #1d2b40 100%);
  color: #fff;
  font-family: "Open Sans", sans-serif;
`;

const StartTile = styled.div`
  width: 74px;
  flex: none;
  display: flex;
  align-items: center;
  justify-content: center;
`;

const TaskSearch = styled.div`
  width: 514px;
  flex: none;
  display: flex;
  align-items: flex-end;
  background: #f2f2f2;
  border-top: 2px solid #c4c4c4;
  padding-left: 17px;
  overflow: hidden;
`;

const SearchGlassSlim = styled.div`
  height: 58px;
  display: flex;
  align-items: center;
`;

const TaskSearchText = styled.span`
  flex: 1;
  height: 58px;
  display: flex;
  align-items: center;
  margin-left: 17px;
  font-size: 21.5px;
  color: #222;
`;

const TaskTile = styled.div<{ $open?: boolean; $active?: boolean }>`
  width: 75px;
  flex: none;
  display: flex;
  align-items: center;
  justify-content: center;
  background: ${(p) => (p.$active ? "#4c5b66" : "transparent")};
  position: relative;

  &::after {
    content: "";
    position: absolute;
    bottom: 0;
    height: 3px;
    left: ${(p) => (p.$active ? "0" : "7px")};
    right: ${(p) => (p.$active ? "0" : "7px")};
    background: ${(p) => (p.$open ? "#76b9ed" : "transparent")};
  }
`;

const Tray = styled.div`
  flex: 1;
  display: flex;
  align-items: center;
  padding: 0 37px 0 111px;
`;

const Temperature = styled.span`
  margin-left: 12px;
  font-size: 19.5px;
`;

const TrayIcons = styled.div`
  margin-left: 18px;
  display: grid;
  grid-auto-flow: column;
  grid-auto-columns: 35.8px;
  align-items: center;
  justify-items: center;
`;

const Clock = styled.div`
  margin-left: auto;
  margin-right: 27px;
  display: flex;
  flex-direction: column;
  align-items: center;
  font-size: 17.8px;
  line-height: 28px;
`;
